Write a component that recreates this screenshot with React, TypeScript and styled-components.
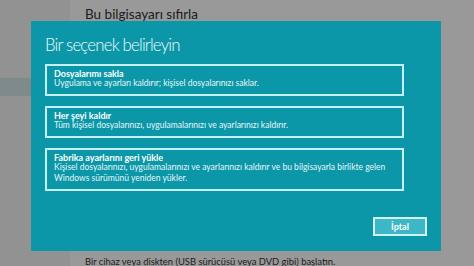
import React from "react";
import styled, { createGlobalStyle } from "styled-components";

const GlobalStyle = createGlobalStyle`
  html, body { margin: 0; padding: 0; }
  body {
    width: 474px;
    height: 266px;
    overflow: hidden;
    background: #959595;
    font-family: "Lato", "Noto Sans", "DejaVu Sans", sans-serif;
  }
`;

const Page = styled.div`
  position: relative;
  display: grid;
  grid-template-columns: 70px 1fr;
  width: 474px;
  height: 266px;
`;

const NavPane = styled.div`
  background: #929292;
  padding-top: 78px;
`;

const NavItem = styled.div<{ $selected?: boolean }>`
  height: 18px;
  background: ${(p) => (p.$selected ? "#7e8a8c" : "transparent")};
`;

const Content = styled.div`
  display: flex;
  flex-direction: column;
  padding-left: 15px;
  background: #999999;
`;

const PageHeading = styled.div`
  margin-top: 6px;
  font-size: 13.5px;
  line-height: 16px;
  color: #1c1c1c;
`;

const PageText = styled.div`
  margin-top: auto;
  margin-bottom: -2px;
  font-size: 9.4px;
  line-height: 12px;
  color: #1c1c1c;
  white-space: nowrap;
`;

const Dialog = styled.div`
  position: absolute;
  left: 31px;
  top: 21px;
  width: 410px;
  height: 230px;
  box-sizing: border-box;
  padding: 14px 14px 15px 14px;
  background: #0b97a8;
  display: flex;
  flex-direction: column;
  color: #ffffff;
`;

const Title = styled.div`
  font-size: 16.8px;
  line-height: 20px;
  font-weight: 300;
  letter-spacing: -0.8px;
  color: #f2fbfc;
`;

const Options = styled.div`
  margin-top: 9px;
  width: 359px;
  display: flex;
  flex-direction: column;
  gap: 10px;
`;

const Option = styled.div`
  box-sizing: border-box;
  border: 2px solid #c4eff3;
  padding: 3px 7px 5px 7px;
`;

const OptionTitle = styled.div`
  font-size: 9px;
  line-height: 9px;
  font-weight: 700;
  color: #ffffff;
`;

const OptionText = styled.div`
  font-size: 8.5px;
  line-height: 11px;
  color: #e6f6f8;
  white-space: nowrap;
`;

const Footer = styled.div`
  margin-top: auto;
  display: flex;
  justify-content: flex-end;
`;

const CancelButton = styled.button`
  width: 54px;
  height: 19px;
  box-sizing: border-box;
  border: 2px solid #d2f3f6;
  background: #3db6c5;
  color: #ffffff;
  font-family: inherit;
  font-size: 9px;
  font-weight: 700;
  padding: 0;
`;

const options = [
  {
    title: "Dosyalarımı sakla",
    lines: ["Uygulama ve ayarları kaldırır; kişisel dosyalarınızı saklar."],
  },
  {
    title: "Her şeyi kaldır",
    lines: ["Tüm kişisel dosyalarınızı, uygulamalarınızı ve ayarlarınızı kaldırır."],
  },
  {
    title: "Fabrika ayarlarını geri yükle",
    lines: [
      "Kişisel dosyalarınızı, uygulamalarınızı ve ayarlarınızı kaldırır ve bu bilgisayarla birlikte gelen",
      "Windows sürümünü yeniden yükler.",
    ],
  },
];

export default function App() {
  return (
    <>
      <GlobalStyle />
      <Page>
        <NavPane>
          <NavItem $selected />
        </NavPane>
        <Content>
          <PageHeading>Bu bilgisayarı sıfırla</PageHeading>
          <PageText>Bir cihaz veya diskten (USB sürücüsü veya DVD gibi) başlatın.</PageText>
        </Content>
        <Dialog>
          <Title>Bir seçenek belirleyin</Title>
          <Options>
            {options.map((o) => (
              <Option key={o.title}>
                <OptionTitle>{o.title}</OptionTitle>
                {o.lines.map((l) => (
                  <OptionText key={l}>{l}</OptionText>
                ))}
              </Option>
            ))}
          </Options>
          <Footer>
            <CancelButton>İptal</CancelButton>
          </Footer>
        </Dialog>
      </Page>
    </>
  );
}
